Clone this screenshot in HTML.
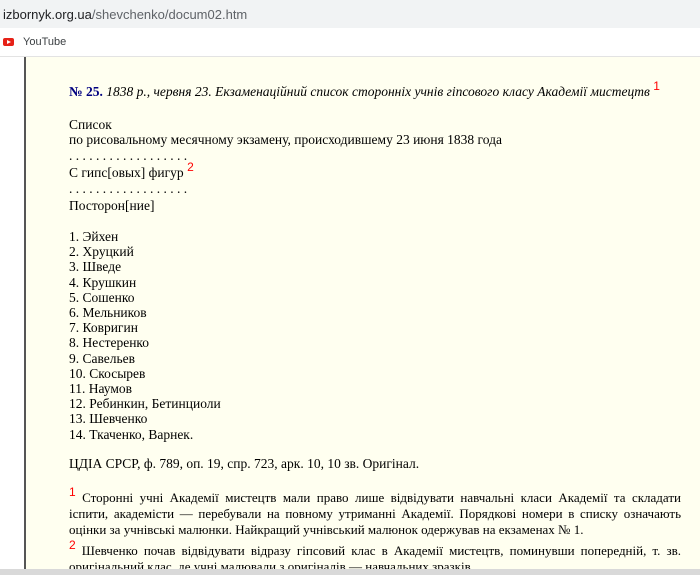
<!DOCTYPE html>
<html><head><meta charset="utf-8"><style>
html,body{margin:0;padding:0;width:700px;height:575px;overflow:hidden;background:#fff;}
.url{position:absolute;left:0;top:0;width:700px;height:28px;background:#f1f3f4;font:13px "Liberation Sans",sans-serif;color:#5f6368;line-height:30px;}
.url span{position:absolute;left:3px;}
.url b{font-weight:normal;color:#202124;}
.bm{position:absolute;left:0;top:28px;width:700px;height:28px;background:#fff;border-bottom:1px solid #e3e3e3;font:11px "Liberation Sans",sans-serif;color:#3c4043;}
.yt{position:absolute;left:3px;top:38px;width:11px;height:8px;background:#e62117;border-radius:2px;}
.yt:after{content:"";position:absolute;left:4px;top:2px;border-left:4px solid #fff;border-top:2px solid transparent;border-bottom:2px solid transparent;}
.bm span{position:absolute;left:23px;top:8px;}
.page{position:absolute;left:24px;top:57px;width:676px;height:512px;background:#fffff0;border-left:2px solid #555;}
.c{position:absolute;left:43px;top:-57px;width:612px;font:13.5px/15.2px "Liberation Serif",serif;color:#000;}
.c>p{position:absolute;left:0;margin:0;white-space:nowrap}
.foot{position:absolute;left:0;top:569px;width:700px;height:6px;background:#d9d9d9;}
sup{color:#f00;font-family:"Liberation Sans",sans-serif;font-size:12px;vertical-align:6px;line-height:0}
.c>p.n{width:612px;text-align:justify;font-size:13px;line-height:16px;white-space:normal}
</style></head><body>
<div class="url"><span><b>izbornyk.org.ua</b>/shevchenko/docum02.htm</span></div>
<div class="bm"><span>YouTube</span></div><div class="yt"></div>
<div class="page"><div class="c">
<p style="top:84px"><b style="color:#000080">№ 25.</b> <i>1838 р., червня 23. Екзаменаційний список сторонніх учнів гіпсового класу Академії мистецтв</i> <sup>1</sup></p>
<p style="top:117px">Список</p>
<p style="top:132px">по рисовальному месячному экзамену, происходившему 23 июня 1838 года</p>
<p style="top:148px">. . . . . . . . . . . . . . . . . .</p>
<p style="top:165px">С гипс[овых] фигур <sup>2</sup></p>
<p style="top:181px">. . . . . . . . . . . . . . . . . .</p>
<p style="top:198px">Посторон[ние]</p>
<div style="position:absolute;top:229px;left:0;white-space:nowrap">
<div>1. Эйхен</div><div>2. Хруцкий</div><div>3. Шведе</div><div>4. Крушкин</div><div>5. Сошенко</div><div>6. Мельников</div><div>7. Ковригин</div><div>8. Нестеренко</div><div>9. Савельев</div><div>10. Скосырев</div><div>11. Наумов</div><div>12. Ребинкин, Бетинциоли</div><div>13. Шевченко</div><div>14. Ткаченко, Варнек.</div>
</div>
<p style="top:456px">ЦДІА СРСР, ф. 789, оп. 19, спр. 723, арк. 10, 10 зв. Оригінал.</p>
<p class="n" style="top:490px"><sup>1</sup> Сторонні учні Академії мистецтв мали право лише відвідувати навчальні класи Академії та складати іспити, академісти — перебували на повному утриманні Академії. Порядкові номери в списку означають оцінки за учнівські малюнки. Найкращий учнівський малюнок одержував на екзаменах № 1.</p>
<p class="n" style="top:543px"><sup>2</sup> Шевченко почав відвідувати відразу гіпсовий клас в Академії мистецтв, поминувши попередній, т. зв. оригінальний клас, де учні малювали з оригіналів — навчальних зразків.</p>
</div></div>
<div class="foot"></div>
</body></html>
